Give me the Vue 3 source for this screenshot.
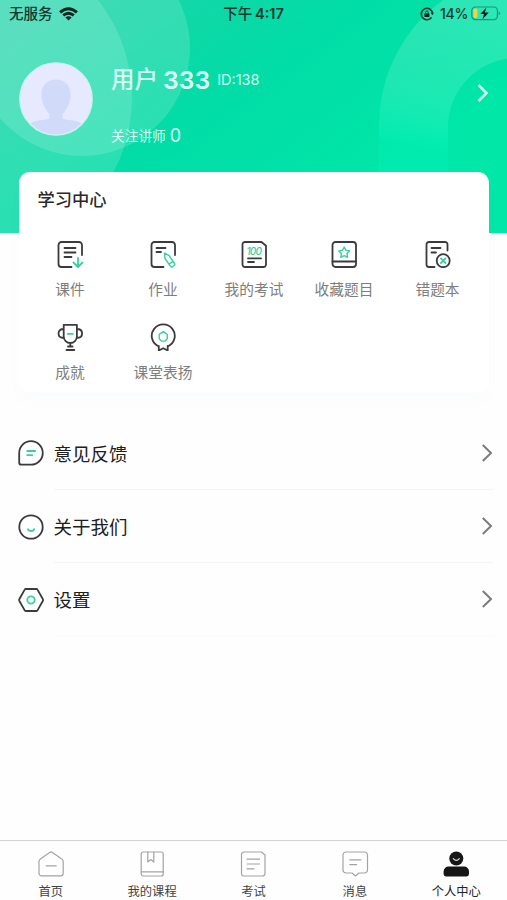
<script setup>
const studyItems = [
  { icon: 'course', label: '课件' },
  { icon: 'homework', label: '作业' },
  { icon: 'exam', label: '我的考试' },
  { icon: 'favorite', label: '收藏题目' },
  { icon: 'mistake', label: '错题本' },
  { icon: 'trophy', label: '成就' },
  { icon: 'praise', label: '课堂表扬' },
]
const links = [
  { icon: 'feedback', label: '意见反馈' },
  { icon: 'about', label: '关于我们' },
  { icon: 'settings', label: '设置' },
]
const tabs = [
  { icon: 'home', label: '首页' },
  { icon: 'book', label: '我的课程' },
  { icon: 'test', label: '考试' },
  { icon: 'message', label: '消息' },
  { icon: 'me', label: '个人中心' },
]
</script>

<template>
  <div class="page">
    <header class="hero">
      <svg class="hero-bg" viewBox="0 0 507 233" aria-hidden="true">
        <defs>
          <linearGradient id="base" gradientUnits="userSpaceOnUse" x1="90" y1="-20" x2="290" y2="250">
            <stop offset="0" stop-color="#1ed3a8" />
            <stop offset="0.5" stop-color="#02dca6" />
            <stop offset="1" stop-color="#00e7a8" />
          </linearGradient>
          <linearGradient id="ring" gradientUnits="userSpaceOnUse" x1="460" y1="10" x2="440" y2="150">
            <stop offset="0" stop-color="#fff" stop-opacity="0.17" />
            <stop offset="0.5" stop-color="#d0fff0" stop-opacity="0.15" />
            <stop offset="0.9" stop-color="#20ffd0" stop-opacity="0.25" />
            <stop offset="1" stop-color="#00f4b8" stop-opacity="0.35" />
          </linearGradient>
        </defs>
        <rect width="507" height="233" fill="url(#base)" />
        <circle cx="82" cy="48" r="108" fill="#fff" fill-opacity="0.15" />
        <circle cx="-26" cy="98" r="158" fill="#e8fff0" fill-opacity="0.16" />
        <path d="M379 125a154 154 0 0 1 154-154V58h-16a69 69 0 0 0-69 69v50h-69z" fill="url(#ring)" />
      </svg>

      <div class="status">
        <div class="status-left">
          <span>无服务</span>
          <svg width="19" height="14" viewBox="0 0 19 14" fill="none" stroke="#08251f" stroke-width="2.9">
            <path d="M1.100 5.300Q9.500-2 17.900 5.300M4.200 8.300q5.300-4.300 10.600 0" />
            <path d="M9.500 13.400 6.400 10.400q3.100-2.400 6.200 0z" fill="#08251f" stroke="none" />
          </svg>
        </div>
        <div class="status-time">下午 <b>4:17</b></div>
        <div class="status-right">
          <svg width="14" height="14" viewBox="0 0 14 14" fill="none" stroke="#12352d" stroke-width="1.600">
            <path d="M11.600 10.400A5.700 5.700 0 1 1 12.600 6" />
            <path d="M10.600 5.800h3.200l-1.400 2.400z" fill="#12352d" stroke="none" />
            <rect x="4.400" y="6.200" width="5" height="3.800" rx=".6" fill="#08251f" stroke="none" />
            <path d="M5.500 6.500V5.400a1.400 1.400 0 0 1 2.800 0v1.100" stroke-width="1" />
          </svg>
          <span class="percent">14%</span>
          <svg width="30" height="15" viewBox="0 0 30 15">
            <rect x=".8" y="1" width="25.600" height="12.600" rx="3.600" fill="none" stroke="#12685a" stroke-opacity=".65" stroke-width="1.200" />
            <rect x="2.400" y="2.600" width="4" height="9.400" rx="1.600" fill="#f4d33c" />
            <path d="M15.400 1.400 9.300 8h3.700l-1.600 5.400 6.400-7h-3.900z" fill="#08251f" />
            <path d="M27.700 5.200q2.400 2 0 4.200z" fill="#12685a" fill-opacity=".65" />
          </svg>
        </div>
      </div>

      <div class="profile">
        <svg class="avatar" viewBox="0 0 74 74">
          <defs><clipPath id="face"><circle cx="37" cy="37" r="35.500" /></clipPath></defs>
          <circle cx="37" cy="37" r="36.200" fill="#e7e9ff" stroke="#c8f6f0" stroke-width="1.300" />
          <g fill="#d2daf9" clip-path="url(#face)">
            <path d="M37 17.500c-9 0-15 6-14.500 16 .4 8 3.500 14 8 18.500V55.500c0 3.500-14 1.500-19 6v14h51v-14c-5-4.500-19-2.500-19-6V52c4.500-4.500 7.600-10.500 8-18.500C52 23.500 46 17.500 37 17.500z" />
          </g>
        </svg>
        <div class="who">
          <div class="name-row">
            <span class="name">用户</span><span class="name-num">333</span><span class="uid">ID:138</span>
          </div>
          <div class="follow">关注讲师 <span class="count">0</span></div>
        </div>
        <svg class="go" width="12" height="20" viewBox="0 0 12 20" fill="none" stroke="#d3fff2" stroke-width="2.500">
          <path d="M1.500 2 9.500 10l-8 8" />
        </svg>
      </div>
    </header>

    <section class="card">
      <h2>学习中心</h2>
      <div class="grid">
        <div v-for="item in studyItems" :key="item.icon" class="cell">
          <svg class="study-icon" viewBox="0 0 28 28">
            <g v-if="item.icon === 'course'">
              <path d="M26 15V5a3 3 0 0 0-3-3H5.500a3 3 0 0 0-3 3v19a3 3 0 0 0 3 3H15.500" />
              <path d="M8.500 8h11M8.500 12.500h11M8.500 17h7" />
              <path class="accent" d="M22 18v9M17.500 22.500 22 27l4.500-4.500" />
            </g>
            <g v-else-if="item.icon === 'homework'">
              <path d="M26 15V5a3 3 0 0 0-3-3H5.500a3 3 0 0 0-3 3v19a3 3 0 0 0 3 3H14.500" />
              <path d="M7.500 8h9M7.500 12h4.500" />
              <path class="accent thin" d="M15.500 13 16 18.500 21.500 26.300a1.500 1.500 0 0 0 2 .3l1.600-1.100a1.500 1.500 0 0 0 .4-2L20.200 15.600zM20 24.200l4.200-2.800" />
            </g>
            <g v-else-if="item.icon === 'exam'">
              <path d="M5 2h16.500L26 5.800V24.500a2.500 2.500 0 0 1-2.500 2.500H5a2.500 2.500 0 0 1-2.500-2.500v-20A2.500 2.500 0 0 1 5 2z" />
              <text x="14.200" y="14.600" text-anchor="middle" textLength="15.500">100</text>
              <path d="M8 18.400h13M8 22h6" />
            </g>
            <g v-else-if="item.icon === 'favorite'">
              <rect x="2.500" y="2" width="23.500" height="25" rx="3" />
              <path d="M2.500 21.500H26" />
              <path class="accent thin" d="m14.200 7 1.700 3.300 3.700.6-2.600 2.700.6 3.700-3.400-1.700-3.400 1.700.6-3.700-2.600-2.700 3.700-.6z" />
            </g>
            <g v-else-if="item.icon === 'mistake'">
              <path d="M23.500 10.500V4.500A2.500 2.500 0 0 0 21 2H5a2.500 2.500 0 0 0-2.500 2.500v20A2.500 2.500 0 0 0 5 27h5.500" />
              <path d="M7.500 8h9M7.500 12.500h4.500" />
              <circle cx="19.200" cy="20.700" r="6.500" />
              <path class="accent" d="m16.900 18.400 4.600 4.600M21.500 18.400l-4.600 4.600" />
            </g>
            <g v-else-if="item.icon === 'trophy'">
              <path d="M7.700 1.800h13.200v11.400a6.600 6.800 0 0 1-13.200 0zM7.700 6Q2.500 6 2.500 10.500T8 15M20.900 6q5.200 0 5.200 4.500T20.600 15M14.300 20v3M12 23.500h4.600M10.500 27h7.800" />
              <path class="accent" d="M11.700 10.800h5.200" />
            </g>
            <g v-else>
              <path d="M9.800 23.500A11.500 11.500 0 1 1 18.700 23.500M9.800 23V27.500l4.450-2.300 4.450 2.300V23" />
              <path class="accent thin" d="m14.250 8.600 4 2.700v4.400l-2.200 2.400h-3.600l-2.200-2.400v-4.400z" />
            </g>
          </svg>
          <span>{{ item.label }}</span>
        </div>
      </div>
    </section>

    <nav class="links">
      <div v-for="link in links" :key="link.icon" class="link">
        <svg class="link-icon" viewBox="0 0 26 26">
          <g v-if="link.icon === 'feedback'">
            <path d="M13 1.200a11.700 11.700 0 1 1 0 23.500H3.500a2.300 2.300 0 0 1-2.300-2.300V13A11.800 11.800 0 0 1 13 1.200z" />
            <path class="accent" d="M9.200 11h8M9.200 15.200h5" />
          </g>
          <g v-else-if="link.icon === 'about'">
            <circle cx="13" cy="13" r="11.700" />
            <path class="accent" d="M9.900 15.200c1.300 2.400 5.100 2.400 6.400 0" />
          </g>
          <g v-else>
            <path d="M8 2h10.500q.7 0 1 .6l5.300 9.400q.5 1 0 2L19.500 23.400q-.3.600-1 .600H7.700q-.7 0-1-.6L1.400 14q-.5-1 0-2L6.700 2.600q.3-.6 1-.6z" />
            <circle class="accent" cx="13" cy="13" r="3.700" />
          </g>
        </svg>
        <div class="link-body">
          <span>{{ link.label }}</span>
          <svg width="12" height="18" viewBox="0 0 12 18" fill="none" stroke="#7b7b7b" stroke-width="2">
            <path d="M1.800 1 10 9l-8.200 8" />
          </svg>
        </div>
      </div>
    </nav>

    <footer class="tabs">
      <div v-for="tab in tabs" :key="tab.icon" class="tab" :class="{ active: tab.icon === 'me' }">
        <svg class="tab-icon" viewBox="0 0 28 28">
          <g v-if="tab.icon === 'home'">
            <path d="M13 2.300q1-.7 2 0L24.800 9q1.400 1 1.400 2.700v11.500a2.700 2.700 0 0 1-2.700 2.700H4.700A2.700 2.700 0 0 1 2 23.200V11.700Q2 10 3.400 9z" />
            <path d="M9.200 15.800h10" />
          </g>
          <g v-else-if="tab.icon === 'book'">
            <rect x="3.200" y="2" width="22" height="24" rx="2" />
            <path d="M3.200 21.800h22M9.800 2v10l3-2.500 3 2.500V2" />
          </g>
          <g v-else-if="tab.icon === 'test'">
            <path d="M5 2h17.500L26 5v18.500a2.500 2.500 0 0 1-2.500 2.500H5a2.500 2.500 0 0 1-2.500-2.500v-19A2.500 2.500 0 0 1 5 2z" />
            <path d="M8 9.200h12.500M8 14h12.500M8 18.800h7" />
          </g>
          <g v-else-if="tab.icon === 'message'">
            <path d="M5 2h18.500a3 3 0 0 1 3 3v15a3 3 0 0 1-3 3h-5.500L14.500 26 11 23H5a3 3 0 0 1-3-3V5a3 3 0 0 1 3-3z" />
            <path d="M8.800 9.800h11M8.800 14.600h6.800" />
          </g>
          <g v-else>
            <circle class="solid" cx="14.300" cy="8.500" r="7" />
            <path class="solid" d="M6.500 16.500h15.600a4.900 4.900 0 0 1 4.900 4.900V24a2.400 2.400 0 0 1-2.400 2.400H4A2.400 2.400 0 0 1 1.600 24v-2.600a4.900 4.900 0 0 1 4.900-4.900z" />
            <path class="smile" d="M11.300 8.600q3 3.600 6 0" />
          </g>
        </svg>
        <span>{{ tab.label }}</span>
      </div>
    </footer>
  </div>
</template>

<style>
body {
  background: #fefefe;
}
</style>

<style scoped>
.page {
  display: flex;
  flex-direction: column;
  width: 507px;
  height: 900px;
  overflow: hidden;
  background: #fefefe;
  font-family: Inter, "Noto Sans CJK SC", sans-serif;
  color: #2a2a2a;
}
svg {
  flex: none;
  display: block;
}
.hero {
  position: relative;
  flex: none;
  height: 233px;
}
.hero-bg {
  position: absolute;
  inset: 0;
  width: 507px;
  height: 233px;
}
.status {
  position: relative;
  display: grid;
  grid-template-columns: 1fr auto 1fr;
  align-items: center;
  height: 27px;
  padding: 0 6px 0 9px;
  color: #12352d;
  font-size: 14.500px;
  font-weight: 500;
  line-height: 20px;
}
.status-left,
.status-right {
  display: flex;
  align-items: center;
}
.status-left {
  gap: 6px;
}
.status-right {
  justify-content: flex-end;
}
.status-time {
  margin-left: -3px;
  word-spacing: -1px;
}
.status-time b {
  font-weight: 600;
}
.percent {
  margin: 0 3px 0 6px;
  font-size: 14px;
  letter-spacing: -0.300px;
}
.profile {
  position: relative;
  display: flex;
  align-items: flex-start;
  padding: 34.500px 18px 0 19px;
}
.avatar {
  width: 74px;
  height: 74px;
}
.who {
  flex: 1;
  padding-left: 18px;
  color: #d8fff3;
}
.name-row {
  display: flex;
  align-items: center;
  height: 36px;
  line-height: 36px;
}
.name {
  padding-top: 1px;
  font-size: 23.500px;
  font-weight: 500;
}
.name-num {
  margin-left: 5px;
  font-size: 24.700px;
  font-weight: 600;
}
.uid {
  margin-left: 7px;
  padding-top: 1px;
  font-size: 14.500px;
}
.follow {
  display: flex;
  align-items: center;
  gap: 4px;
  height: 24px;
  margin-top: 26.500px;
  font-size: 13.700px;
  line-height: 24px;
}
.count {
  font-size: 18px;
}
.go {
  margin-top: 21.500px;
}
.card {
  position: relative;
  flex: none;
  box-sizing: border-box;
  width: 470px;
  height: 220px;
  margin: -61px 0 0 19px;
  border-radius: 11px;
  background: #fff;
  box-shadow: 0 10px 14px rgba(110, 130, 200, 0.018);
}
h2 {
  margin: 0;
  padding: 15px 18px 0 18.500px;
  font-size: 17.300px;
  font-weight: 500;
  line-height: 26px;
}
.grid {
  display: grid;
  grid-template-columns: 92px 94px 88px 92px 95px;
  grid-auto-rows: 82.500px;
  padding: 27px 0 0 5px;
}
.cell {
  display: flex;
  flex-direction: column;
  align-items: center;
  gap: 11px;
  color: #7d7d7d;
  font-size: 14.700px;
  line-height: 22px;
}
.study-icon {
  width: 28px;
  height: 28px;
}
.study-icon,
.link-icon {
  fill: none;
  stroke: #3b3b3d;
  stroke-width: 1.800;
  stroke-linecap: round;
  stroke-linejoin: round;
}
.accent {
  stroke: #3acfa2;
}
.thin {
  stroke-width: 1.400;
}
.study-icon text {
  fill: #3acfa2;
  stroke: none;
  font-size: 10px;
  font-style: italic;
  font-weight: 500;
}
.links {
  flex: none;
  padding: 24.500px 14px 0 18px;
}
.link {
  display: flex;
  align-items: center;
  gap: 9.500px;
  height: 73.400px;
}
.link-icon {
  width: 26px;
  height: 26px;
}
.link-body {
  flex: 1;
  display: flex;
  align-items: center;
  justify-content: space-between;
  box-sizing: border-box;
  height: 100%;
  border-bottom: 1px solid #f4f4f4;
  font-size: 18.500px;
  color: #202020;
}
.link:last-child .link-body {
  border-bottom-color: #fbfbfb;
}
.tabs {
  flex: none;
  display: grid;
  grid-template-columns: repeat(5, 1fr);
  box-sizing: border-box;
  height: 60px;
  margin-top: auto;
  border-top: 1px solid #d4d4d4;
}
.tab {
  display: flex;
  flex-direction: column;
  align-items: center;
  gap: 5px;
  padding-top: 9px;
  color: #444;
  font-size: 12.300px;
  line-height: 18px;
}
.tab-icon {
  width: 28px;
  height: 28px;
  fill: none;
  stroke: #a3a3a3;
  stroke-width: 1.200;
  stroke-linecap: round;
  stroke-linejoin: round;
}
.active {
  color: #222;
}
.solid {
  fill: #161616;
  stroke: none;
}
.smile {
  stroke: #ddd;
  stroke-width: 1.200;
}
</style>
